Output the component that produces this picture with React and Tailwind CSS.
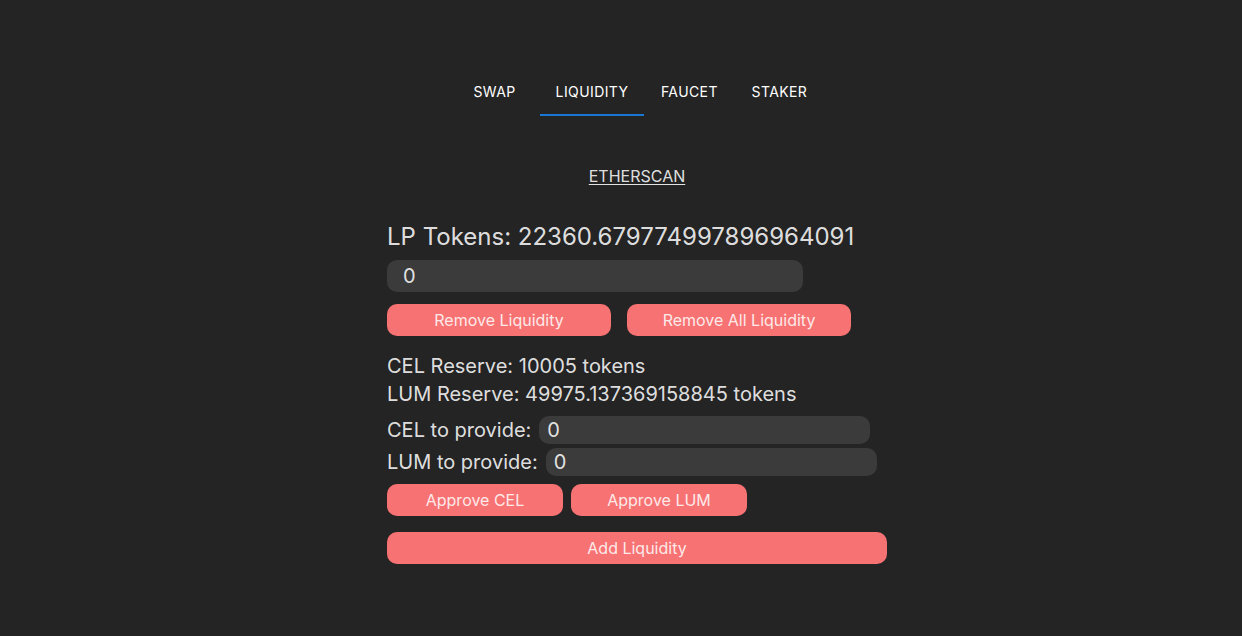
const tabs = ['SWAP', 'LIQUIDITY', 'FAUCET', 'STAKER']

const App = () => {
  return (
    <div
      className="min-h-screen bg-[#242424] text-[rgba(255,255,255,0.87)] pl-[32px]"
      style={{ fontFamily: 'Inter, "Liberation Sans", sans-serif' }}>
      <div className="flex justify-center pt-[68px]">
        {tabs.map((t) => (
          <div
            key={t}
            className={
              t === 'LIQUIDITY'
                ? 'min-w-[90px] h-[48px] px-4 flex items-center justify-center text-[14px] tracking-[0.4px] text-white border-b-2 border-[#1976d2]'
                : 'min-w-[90px] h-[48px] px-4 flex items-center justify-center text-[14px] tracking-[0.4px] text-white border-b-2 border-transparent'
            }>
            {t}
          </div>
        ))}
      </div>

      <div className="flex justify-center mt-[50px]">
        <a href="#" className="text-[16px] underline underline-offset-2 leading-5">
          ETHERSCAN
        </a>
      </div>

      <div className="w-[500px] mx-auto mt-[35px]">
        <h2 className="text-[24px] leading-8">LP Tokens: 22360.679774997896964091</h2>
        <input
          readOnly
          value="0"
          className="mt-[7px] w-[416px] h-8 rounded-[10px] bg-[#3b3b3b] px-4 text-[20px] outline-none"
        />
        <div className="flex gap-4 mt-3">
          <button className="w-[224px] h-8 rounded-[10px] bg-[#f77272] text-[16px] text-[#fde9e9]">
            Remove Liquidity
          </button>
          <button className="w-[224px] h-8 rounded-[10px] bg-[#f77272] text-[16px] text-[#fde9e9]">
            Remove All Liquidity
          </button>
        </div>

        <div className="mt-[16px] text-[20px] leading-7">
          <p>CEL Reserve: 10005 tokens</p>
          <p>LUM Reserve: 49975.137369158845 tokens</p>
        </div>

        <div className="mt-[8px] flex items-center gap-2 text-[20px] leading-7">
          <span>CEL to provide:</span>
          <input
            readOnly
            value="0"
            className="w-[331px] h-7 rounded-[10px] bg-[#3b3b3b] px-2 text-[20px] outline-none"
          />
        </div>
        <div className="mt-1 flex items-center gap-2 text-[20px] leading-7">
          <span>LUM to provide:</span>
          <input
            readOnly
            value="0"
            className="w-[331px] h-7 rounded-[10px] bg-[#3b3b3b] px-2 text-[20px] outline-none"
          />
        </div>

        <div className="flex gap-2 mt-2">
          <button className="w-[176px] h-8 rounded-[10px] bg-[#f77272] text-[16px] text-[#fde9e9]">
            Approve CEL
          </button>
          <button className="w-[176px] h-8 rounded-[10px] bg-[#f77272] text-[16px] text-[#fde9e9]">
            Approve LUM
          </button>
        </div>
        <button className="mt-4 w-[500px] h-8 rounded-[10px] bg-[#f77272] text-[16px] text-[#fde9e9]">
          Add Liquidity
        </button>
      </div>
    </div>
  )
}

export default App
